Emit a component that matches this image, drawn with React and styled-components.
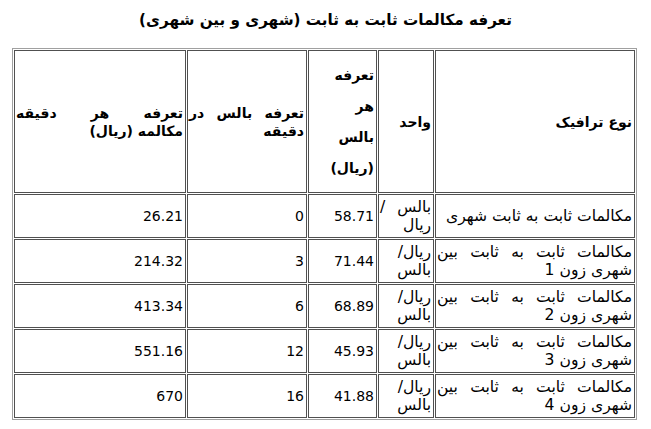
import React from 'react';
import styled, { createGlobalStyle, css } from 'styled-components';

const Global = createGlobalStyle`
  html { background: #fff; }
  body {
    margin: 8px;
    font-family: "DejaVu Sans", Tahoma, sans-serif;
    color: #000;
    background: #fff;
  }
`;

const Title = styled.h1`
  margin: 0 0 16px;
  font-size: 15.2px;
  line-height: 24px;
  font-weight: bold;
  text-align: center;
  direction: rtl;
`;

const Table = styled.table`
  direction: rtl;
  width: 625px;
  margin-left: 4px;
  border: 1px solid #a0a0a0;
  border-spacing: 1px;
  table-layout: fixed;
  font-size: 14px;
`;

const cellBase = css`
  border: 1px solid #505050;
  padding: 1px 2px 1px 1px;
  box-sizing: border-box;
  vertical-align: middle;
  text-align: right;
  line-height: 18px;
`;

const HeadCell = styled.th`
  ${cellBase}
  width: ${(p) => p.$w}px;
  height: 143px;
  font-weight: bold;
`;

const Cell = styled.td`
  ${cellBase}
  height: 44px;
  font-weight: normal;
  font-size: ${(p) => (p.$text ? '15.6px' : '14px')};
`;

const Line = styled.div`
  white-space: nowrap;
  line-height: ${(p) => p.$lh || 18}px;
  text-align: ${(p) => (p.$justify ? 'justify' : 'right')};
  text-align-last: ${(p) => (p.$justify ? 'justify' : 'right')};
`;

const Lines = ({ items, lh }) => (
  <>
    {items.map((t, i) => (
      <Line key={i} $lh={lh} $justify={items.length > 1 && i < items.length - 1}>
        {t}
      </Line>
    ))}
  </>
);

const rows = [
  {
    type: ['مکالمات ثابت به ثابت شهری'],
    unit: ['بالس /', 'ریال'],
    pulse: '58.71',
    perMin: '0',
    rate: '26.21',
  },
  {
    type: ['مکالمات ثابت به ثابت بین', 'شهری زون 1'],
    unit: ['ریال/', 'بالس'],
    pulse: '71.44',
    perMin: '3',
    rate: '214.32',
  },
  {
    type: ['مکالمات ثابت به ثابت بین', 'شهری زون 2'],
    unit: ['ریال/', 'بالس'],
    pulse: '68.89',
    perMin: '6',
    rate: '413.34',
  },
  {
    type: ['مکالمات ثابت به ثابت بین', 'شهری زون 3'],
    unit: ['ریال/', 'بالس'],
    pulse: '45.93',
    perMin: '12',
    rate: '551.16',
  },
  {
    type: ['مکالمات ثابت به ثابت بین', 'شهری زون 4'],
    unit: ['ریال/', 'بالس'],
    pulse: '41.88',
    perMin: '16',
    rate: '670',
  },
];

export default function App() {
  return (
    <>
      <Global />
      <Title>تعرفه مکالمات ثابت به ثابت (شهری و بین شهری)</Title>
      <Table>
        <thead>
          <tr>
            <HeadCell $w={200}>نوع ترافیک</HeadCell>
            <HeadCell $w={56}>واحد</HeadCell>
            <HeadCell $w={69}>
              <Lines items={['تعرفه', 'هر', 'بالس', '(ریال)']} lh={31} />
            </HeadCell>
            <HeadCell $w={120}>
              <Lines items={['تعرفه بالس در', 'دقیقه']} />
            </HeadCell>
            <HeadCell $w={172}>
              <Lines items={['تعرفه هر دقیقه', 'مکالمه (ریال)']} />
            </HeadCell>
          </tr>
        </thead>
        <tbody>
          {rows.map((r, i) => (
            <tr key={i}>
              <Cell $text>
                <Lines items={r.type} />
              </Cell>
              <Cell $text>
                <Lines items={r.unit} />
              </Cell>
              <Cell>{r.pulse}</Cell>
              <Cell>{r.perMin}</Cell>
              <Cell>{r.rate}</Cell>
            </tr>
          ))}
        </tbody>
      </Table>
    </>
  );
}
